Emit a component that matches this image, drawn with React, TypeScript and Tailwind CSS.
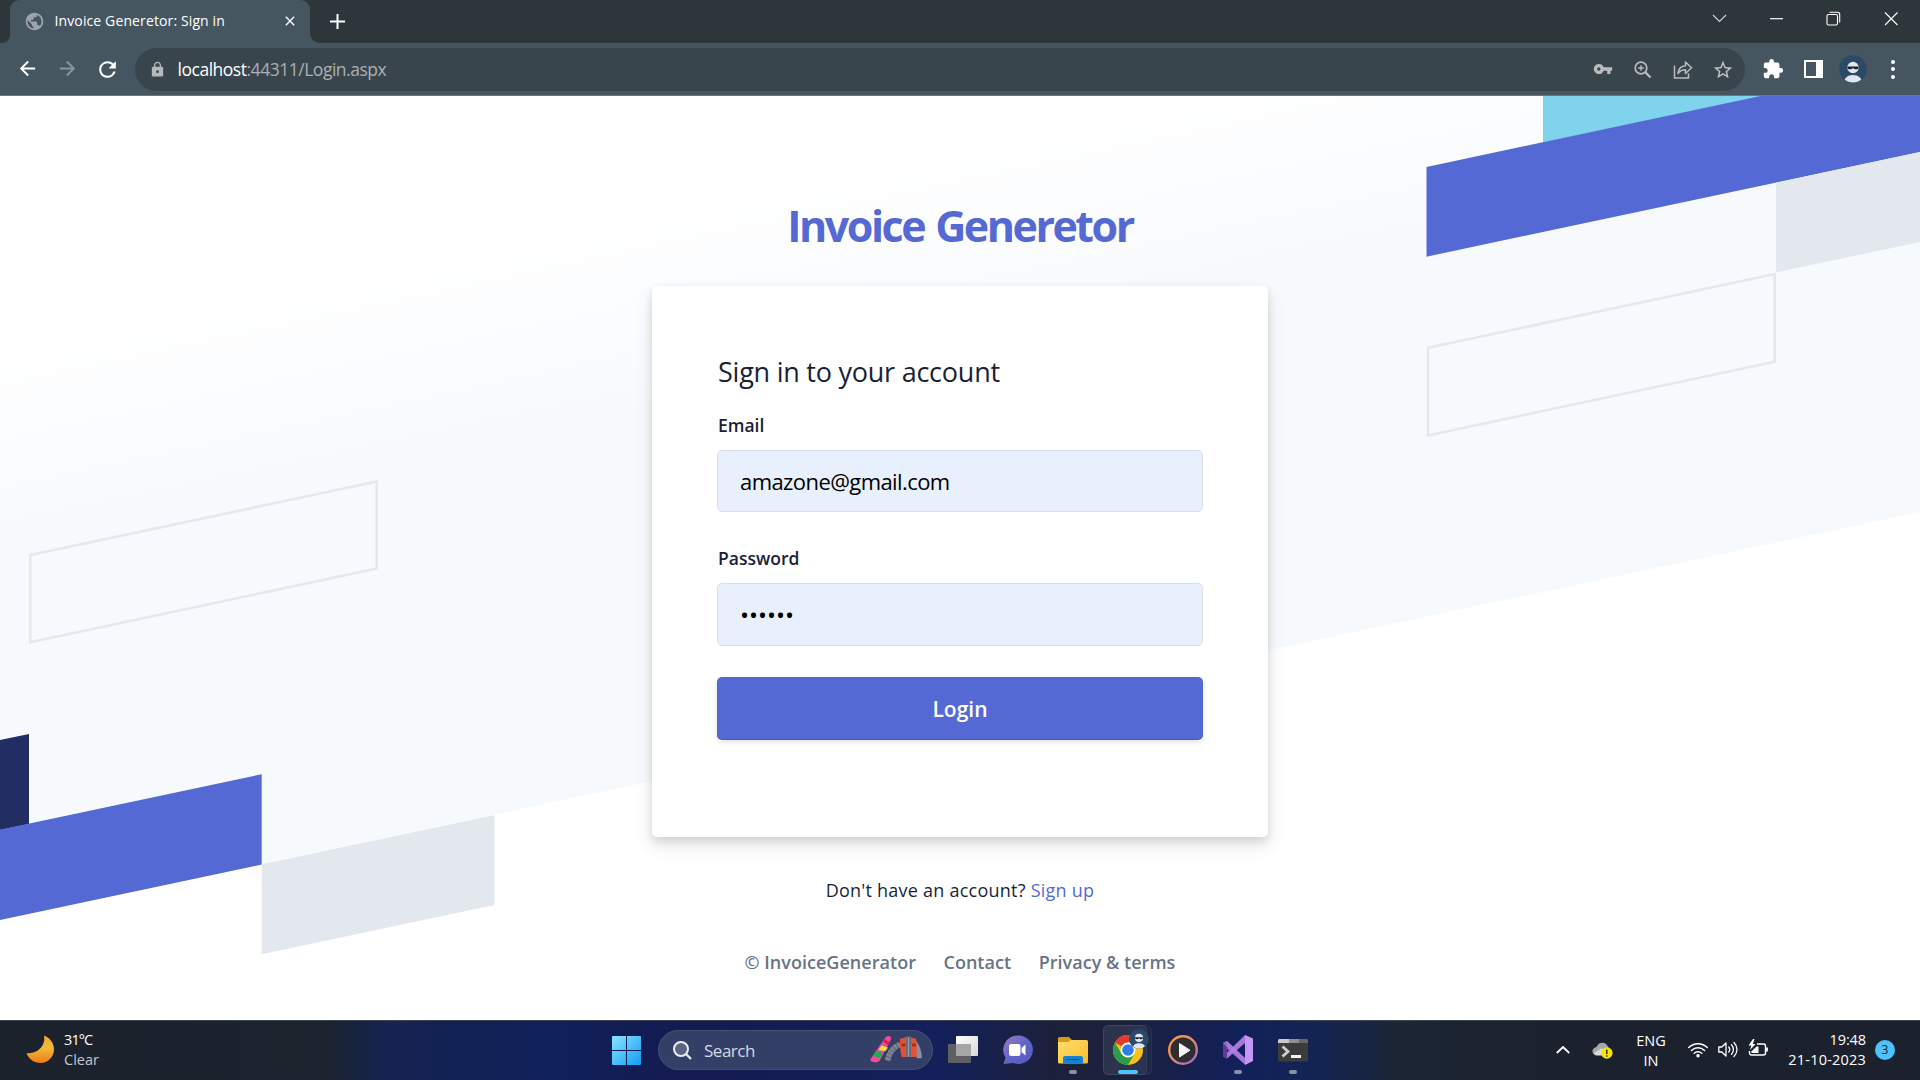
import type { ReactNode } from 'react';
import { MdVpnKey, MdStarBorder, MdExtension, MdPublic, MdLock, MdRefresh, MdArrowBack, MdArrowForward, MdClose } from 'react-icons/md';

function TabStrip() {
  return (
    <div className="flex h-[43px] justify-between bg-[#2c363b]">
      <div className="flex">
        <div className="flex w-[10px] bg-[#455660]">
          <div className="w-full rounded-br-[8px] bg-[#2c363b]" />
        </div>
        <div className="flex bg-[#2c363b]">
          <div className="flex w-[300px] items-center rounded-t-[9px] bg-[#455660] pb-[1px] pl-[14px] pr-[11px]">
            <MdPublic className="size-[21px] shrink-0 text-[#9da3ab]" />
            <span className="ml-[9.500px] flex-1 whitespace-nowrap text-[14px] leading-[20px] tracking-[0.120px] text-white">
              Invoice Generetor: Sign in
            </span>
            <MdClose className="mr-[1px] size-[16px] text-white" />
          </div>
        </div>
        <div className="w-[10px] bg-[#455660]">
          <div className="h-full rounded-bl-[10px] bg-[#2c363b]" />
        </div>
        <svg className="ml-[10px] mt-[14px] size-[15px]" viewBox="0 0 15 15" stroke="#fff" strokeWidth="2">
          <path d="M7.5 0v15M0 7.5h15" />
        </svg>
      </div>
      <div className="flex items-center pb-[7px] pr-[21px]">
        <svg className="mr-[42px] size-[15px]" viewBox="0 0 15 15" fill="none" stroke="#d5d8da" strokeWidth="1.1">
          <path d="M1 4l6.500 6.500 6.500-6.500" />
        </svg>
        <svg className="mr-[42px] size-[15px]" viewBox="0 0 15 15" stroke="#fff" strokeWidth="1.2">
          <path d="M1 7.700h13" />
        </svg>
        <svg className="mr-[43px] size-[15px]" viewBox="0 0 15 15" fill="none" stroke="#fff" strokeWidth="1.1">
          <rect x="1" y="3.500" width="10.500" height="10.500" rx="1.500" />
          <path d="M3.500 1.300h8c1.200 0 2.200 1 2.200 2.200v8" />
        </svg>
        <svg className="size-[15px]" viewBox="0 0 15 15" stroke="#fff" strokeWidth="1.1">
          <path d="M1 1.500l12.500 12.500M13.500 1.500L1 14" />
        </svg>
      </div>
    </div>
  );
}

function IconCell({ children }: { children: ReactNode }) {
  return <div className="flex w-10 shrink-0 items-center justify-center">{children}</div>;
}

function Person() {
  return (
    <svg className="size-full" viewBox="0 0 28 28">
      <clipPath id="avatarClip"><circle cx="14" cy="14" r="13.500" /></clipPath>
      <circle cx="14" cy="14" r="13.800" fill="#2a4a68" />
      <g clipPath="url(#avatarClip)">
        <circle cx="14" cy="12.500" r="5.700" fill="#dfe7ef" />
        <path d="M5 28c0-5 3.500-8 9-8s9 3 9 8z" fill="#dde6f2" />
      </g>
      <path d="M8.500 11.500h11v1.200c0 2-4 2-5.500.3-1.500 1.700-5.500 1.700-5.500-.3z" fill="#20242a" />
    </svg>
  );
}

function Toolbar() {
  return (
    <div className="flex h-[53px] border-b border-[#6b7780] bg-[#455660] pb-[4px] pl-[7px] pr-[7px] pt-[5px]">
      <IconCell><MdArrowBack className="mb-[2px] size-[23px] text-white" /></IconCell>
      <IconCell><MdArrowForward className="mb-[2px] size-[23px] text-[#8b959c]" /></IconCell>
      <IconCell><MdRefresh className="mb-[1px] size-[25px] text-white" /></IconCell>
      <div className="ml-[8px] flex w-[1610px] items-center rounded-full bg-[#39454c] pl-[14px] pr-[2px]">
        <MdLock className="size-[17px] text-[#b5b9bd]" />
        <span className="mb-[1px] ml-[11.500px] flex-1 whitespace-nowrap text-[17.500px] leading-[24px] tracking-[-0.480px] text-[#aab0b4]">
          <span className="text-white">localhost</span>:44311/Login.aspx
        </span>
        <IconCell><MdVpnKey className="mb-[1px] size-[20px] text-[#bbbcbe]" /></IconCell>
        <IconCell>
          <svg className="size-[18px]" viewBox="0 0 18 18" fill="none" stroke="#bbbcbe" strokeWidth="1.700">
            <circle cx="7" cy="7" r="5.800" />
            <path d="M11.300 11.300l5.200 5.200" strokeWidth="2.300" />
            <path d="M7 4.200v5.600M4.200 7h5.600" strokeWidth="1.400" />
          </svg>
        </IconCell>
        <IconCell>
          <svg className="size-[20px]" viewBox="0 0 20 20" fill="none" stroke="#bbbcbe" strokeWidth="1.500">
            <path d="M1.500 5.500v12.500h14v-4.500" />
            <path d="M5 13.500c.5-5 3.500-7.500 7.500-7.700V2l6 5.800-6 5.700V9.800c-3.500 0-5.500 1-7.500 3.700z" strokeLinejoin="round" />
          </svg>
        </IconCell>
        <IconCell><MdStarBorder className="size-[22px] text-[#c3c4c6]" /></IconCell>
      </div>
      <div className="ml-[8px] flex">
        <IconCell><MdExtension className="mb-[2px] size-[22px] text-white" /></IconCell>
        <IconCell>
          <div className="mb-[1px] h-[18px] w-[19px] border-[2.500px] border-r-[7px] border-white" />
        </IconCell>
        <IconCell><div className="mb-[1px] size-[28px]"><Person /></div></IconCell>
        <IconCell>
          <div className="mb-[1px] flex flex-col gap-[3.500px]">
            <i className="size-[4px] rounded-full bg-white" />
            <i className="size-[4px] rounded-full bg-white" />
            <i className="size-[4px] rounded-full bg-white" />
          </div>
        </IconCell>
      </div>
    </div>
  );
}

function Backdrop() {
  return (
    <svg className="absolute inset-0 h-full w-full" viewBox="0 96 1920 924">
      <defs>
        <linearGradient id="sky" gradientUnits="userSpaceOnUse" x1="0" y1="340" x2="41" y2="533">
          <stop offset="0" stopColor="#ffffff" />
          <stop offset="1" stopColor="#f7fafd" />
        </linearGradient>
      </defs>
      <path d="M0 330L1100 96H1920V512L0 919.500z" fill="url(#sky)" />
      <path d="M1543 96h220L1543 142.500z" fill="#7fd3ed" />
      <path d="M1426.500 167L1760.500 96H1920V152L1426.500 256.700z" fill="#5469d4" />
      <path d="M1776 182.600L1920 152V242L1776 272.500z" fill="#e3e8ee" />
      <path d="M1428 347.800L1774.700 274V361.700L1428 435.500z" fill="none" stroke="#e3e8ee" strokeWidth="2.500" />
      <path d="M30.300 555L376.700 481.500V568.500L30.300 642.200z" fill="none" stroke="#e3e8ee" strokeWidth="2.500" />
      <path d="M0 740L29 734V824L0 830z" fill="#212d63" />
      <path d="M0 829.800L261.700 774.200V864.500L0 920z" fill="#5469d4" />
      <path d="M261.700 864.300L494.500 815V905L261.700 954.200z" fill="#e3e8ee" />
    </svg>
  );
}

function LoginPage() {
  return (
    <div className="relative flex h-[924px] flex-col items-center overflow-hidden bg-white pt-[105px] text-[#1a1f36]">
      <Backdrop />
      <h1 className="relative whitespace-nowrap text-[43px] font-bold leading-[50px] tracking-[-2.500px] text-[#5469d4] [word-spacing:2.500px]">
        Invoice Generetor
      </h1>
      <div className="relative mt-[35px] h-[551px] w-[616px] rounded-[5px] bg-white px-[65px] pt-[66px] shadow-[0_9px_18px_rgba(60,66,87,0.12),0_4px_8px_rgba(0,0,0,0.12)]">
        <div className="ml-px whitespace-nowrap text-[27px] leading-[40px] tracking-[-0.240px]">Sign in to your account</div>
        <div className="ml-px mt-[21px] text-[17.500px] font-semibold leading-[24px]">Email</div>
        <div className="mt-[13px] flex h-[62px] items-center rounded-[5px] border border-[#d9dee8] bg-[#e8f0fe] px-[22px] text-[22px] tracking-[-0.580px] text-black">
          amazone@gmail.com
        </div>
        <div className="ml-px mt-[34px] text-[17.500px] font-semibold leading-[24px]">Password</div>
        <div className="mt-[13px] flex h-[63px] items-center rounded-[5px] border border-[#d9dee8] bg-[#e8f0fe] px-[22px] text-[24px] text-black">
          ••••••
        </div>
        <div className="mt-[31px] flex h-[63px] items-center justify-center rounded-[5px] bg-[#5469d4] pt-[2px] text-[21px] font-semibold text-white shadow-[inset_0_-1px_1px_rgba(0,0,0,0.15),0_2px_5px_rgba(0,0,0,0.12)]">
          Login
        </div>
      </div>
      <div className="relative mt-[41px] whitespace-nowrap text-[18px] leading-[24px] tracking-[0.240px]">
        Don't have an account? <span className="text-[#5469d4]">Sign up</span>
      </div>
      <div className="relative mt-[48px] flex gap-[27.500px] whitespace-nowrap text-[18px] font-semibold leading-[24px] tracking-[0.030px] text-[#697386]">
        <span>© InvoiceGenerator</span>
        <span>Contact</span>
        <span>Privacy &amp; terms</span>
      </div>
    </div>
  );
}

function AppCell({ children, mark }: { children: ReactNode; mark?: boolean }) {
  return (
    <div className="flex h-full w-[55px] flex-col items-center pt-[14px]">
      <div className="size-[30px]">{children}</div>
      {mark && <i className="mt-[5px] h-[4px] w-[8px] rounded-full bg-[#8b8fa3]" />}
    </div>
  );
}

function ChromeLogo() {
  return (
    <svg className="size-[30px]" viewBox="0 0 48 48">
      <circle cx="24" cy="24" r="24" fill="#fbc116" />
      <path d="M24 24L3.200 12A24 24 0 0 1 44.800 12H24z" fill="#e33b2e" />
      <path d="M3.200 12A24 24 0 0 0 24 48L34.400 30H24L13.600 30z" fill="#2d9c4a" />
      <circle cx="24" cy="24" r="12" fill="#fff" />
      <circle cx="24" cy="24" r="9.300" fill="#2f7df0" />
    </svg>
  );
}

function SearchArt() {
  return (
    <svg className="h-[30px] w-[54px]" viewBox="0 0 54 30">
      <path d="M16 3c2-3 7-2.500 6 1.500L10.500 26c-2 2.500-10 1.500-9-2z" fill="#f0499c" />
      <path d="M12.500 10.500l6.500 2-2.500 3.500-7-1z" fill="#ffe23c" />
      <path d="M15.500 4l5.500 3.500-2 2.500-5-3.500z" fill="#d3204a" />
      <ellipse cx="9" cy="19.500" rx="4" ry="3" fill="#16b14b" />
      <path d="M31 9.500c-6 2-11 8-12.500 16.500" stroke="#565a6c" strokeWidth="5.500" fill="none" />
      <path d="M31 9.500c-6 2-11 8-12.500 16.500" stroke="#7f8397" strokeWidth="5.500" fill="none" strokeDasharray="2.800 .8" />
      <path d="M45 4c5 4 7.500 11 8 19l-5 .5-4-11z" fill="#8b8ea4" />
      <path d="M31 4l8-2.500L47 4l1 7-.5 11h-15L31 12z" fill="#e8502f" />
      <path d="M37 1.500h5V22h-5z" fill="#686c7d" />
      <path d="M39.500 3v19" stroke="#a9adb8" strokeWidth=".8" />
      <path d="M32.500 8.500h4v3h-4zM43 8.500h4v3h-4z" fill="#9b3428" />
    </svg>
  );
}

function Taskbar() {
  return (
    <div className="flex h-[60px] border-t border-[#3f4450] bg-[linear-gradient(90deg,#1c222c_0px,#1c232e_325px,#142350_385px,#10205a_560px,#141b50_680px,#13205a_940px,#1c2038_1060px,#1b2040_1130px,#12205a_1240px,#142451_1320px,#1b2534_1400px,#1c222d_1550px)] text-[14.500px] leading-[20px] text-white">
      <div className="flex w-[612px] pl-[26px]">
        <svg className="mt-[14px] size-[29px]" viewBox="0 0 29 29">
          <defs>
            <linearGradient id="moon" x1="0" y1="0" x2="0" y2="1">
              <stop offset="0" stopColor="#f0a73a" />
              <stop offset=".45" stopColor="#f3b935" />
              <stop offset="1" stopColor="#ec7b1d" />
            </linearGradient>
          </defs>
          <path d="M18 0.500C24 3 28 8 28 14.500 28 22 22 28 14.500 28 8 28 2.500 24 .5 18 11 19.500 20 11 18 .5z" fill="url(#moon)" />
        </svg>
        <div className="ml-[9px] mt-[9px]">
          <div className="tracking-[-0.900px]">31°C</div>
          <div className="text-[#c4c8ce]">Clear</div>
        </div>
      </div>
      <svg className="mt-[15px] size-[29px]" viewBox="0 0 29 29">
        <defs>
          <linearGradient id="win" x1="0" y1="0" x2="1" y2="1">
            <stop offset="0" stopColor="#8ce4ff" />
            <stop offset="1" stopColor="#0f9cf5" />
          </linearGradient>
        </defs>
        <path d="M1 0h13v14H0V1a1 1 0 0 1 1-1zM15 0h13a1 1 0 0 1 1 1v13H15zM0 15h14v14H1a1 1 0 0 1-1-1zM15 15h14v13a1 1 0 0 1-1 1H15z" fill="url(#win)" />
      </svg>
      <div className="ml-[17px] mt-[9px] flex h-[40px] w-[275px] items-center rounded-full border border-[#475073] bg-[#333f66] pl-[14px] pr-[9px]">
        <svg className="size-[19px]" viewBox="0 0 19 19" fill="none" stroke="#eceef3" strokeWidth="2">
          <circle cx="8" cy="8" r="7" fill="#5a6484" />
          <path d="M13 13l5 5" strokeWidth="2.300" />
        </svg>
        <span className="ml-[12px] mt-[2px] flex-1 text-[17px] tracking-[-0.480px] text-[#d5d9e3]">Search</span>
        <SearchArt />
      </div>
      <div className="ml-[2px] flex">
        <AppCell>
          <svg className="size-[30px]" viewBox="0 0 30 30">
            <defs>
              <linearGradient id="sheet" x1="0" y1="0" x2="1" y2="1">
                <stop offset="0" stopColor="#fff" />
                <stop offset="1" stopColor="#d7d7d7" />
              </linearGradient>
            </defs>
            <rect x="8" y="1" width="22" height="20" rx="1" fill="url(#sheet)" />
            <rect x="0" y="9" width="23" height="19" rx="1" fill="#5d5f63" />
            <path d="M8 9h15v12H8z" fill="#a6a6a8" />
          </svg>
        </AppCell>
        <AppCell>
          <svg className="size-[30px]" viewBox="0 0 30 30">
            <defs>
              <linearGradient id="chat" x1="0" y1="0" x2="1" y2="1">
                <stop offset="0" stopColor="#9b7cc4" />
                <stop offset=".5" stopColor="#6264c7" />
                <stop offset="1" stopColor="#5458c0" />
              </linearGradient>
            </defs>
            <path d="M14.500 0.500a14.300 14.300 0 1 1-4 27.600L.5 29l2-6.500A14.300 14.300 0 0 1 14.500 .5z" fill="url(#chat)" />
            <rect x="6" y="9" width="11.500" height="12" rx="2" fill="#fff" />
            <path d="M18.500 13l4-3.500v11l-4-3.500z" fill="#fff" />
          </svg>
        </AppCell>
        <AppCell mark>
          <svg className="size-[30px]" viewBox="0 0 30 30">
            <defs>
              <linearGradient id="folder" x1="0" y1="0" x2="1" y2="1">
                <stop offset="0" stopColor="#ffdf70" />
                <stop offset="1" stopColor="#f9bd25" />
              </linearGradient>
            </defs>
            <path d="M0 3.500A1.500 1.500 0 0 1 1.500 2H11l3 3-3 5H0z" fill="#dc9a12" />
            <path d="M0 7h10l3-2h15.500A1.500 1.500 0 0 1 30 6.500V27a1.500 1.500 0 0 1-1.500 1.500h-27A1.500 1.500 0 0 1 0 27z" fill="url(#folder)" />
            <path d="M5 28.500V23a2 2 0 0 1 2-2h16a2 2 0 0 1 2 2v5.500z" fill="#1283d3" />
            <path d="M8.500 24.500h13" stroke="#064f8d" strokeWidth="1.200" />
          </svg>
        </AppCell>
        <div className="relative flex w-[55px] justify-center pt-[4px]">
          <div className="absolute left-[3px] top-[4px] h-[50px] w-[49px] rounded-[6px] border border-white/5 bg-white/[0.03]" />
          <div className="relative -ml-[5px] flex h-[50px] w-[44px] flex-col items-center rounded-[5px] border border-white/5 bg-white/5 pl-[5px] pt-[9px]">
            <ChromeLogo />
            <i className="mt-[5px] h-[4px] w-[20px] rounded-full bg-[#4cc2ff]" />
          </div>
          <div className="absolute left-[29px] top-[8px] size-[20px]"><Person /></div>
        </div>
        <AppCell>
          <svg className="size-[30px]" viewBox="0 0 30 30">
            <defs>
              <linearGradient id="ring" x1="0" y1="0" x2="1" y2="1">
                <stop offset="0" stopColor="#ff9a3d" />
                <stop offset=".5" stopColor="#e98a72" />
                <stop offset="1" stopColor="#9a62cf" />
              </linearGradient>
            </defs>
            <circle cx="15" cy="15" r="13.800" fill="#2e2e30" stroke="url(#ring)" strokeWidth="2.400" />
            <path d="M11.500 8.500v13.500l10.500-6.800z" fill="#f4f4f4" stroke="#f4f4f4" strokeLinejoin="round" />
          </svg>
        </AppCell>
        <AppCell mark>
          <svg className="size-[30px]" viewBox="0 0 30 30">
            <path d="M0 8l4-2 18 17v6.500L4 14v9l-4-2z" fill="#8661c5" />
            <path d="M0 21.500L22 0v8L4 23.500z" fill="#a877dc" />
            <path d="M0 8l4-2v17.500L0 21.500z" fill="#5f3c92" />
            <path d="M4 6l18 17v6.800L0 8z" fill="#b184e4" fillOpacity=".65" />
            <path d="M22 0l8 3.500V26l-8 4z" fill="#c795f5" />
          </svg>
        </AppCell>
        <AppCell mark>
          <svg className="size-[30px]" viewBox="0 0 30 30">
            <rect x="0" y="4" width="30" height="22.500" rx="1.500" fill="#3c3c3c" />
            <path d="M0 8V5.500a1.500 1.500 0 0 1 1.500-1.500H11v4z" fill="#c9c9c9" />
            <path d="M11 4h10v4H11z" fill="#8f8f8f" />
            <path d="M21 4h7.500A1.500 1.500 0 0 1 30 5.500v2.500h-9z" fill="#676767" />
            <path d="M4.500 11.500l5.500 5-5.500 5" fill="none" stroke="#cfcfcf" strokeWidth="2.800" />
            <path d="M13 21.500h10" stroke="#f4f4f4" strokeWidth="3" />
          </svg>
        </AppCell>
      </div>
      <div className="ml-auto flex pr-[25px]">
        <svg className="mt-[22px] h-[14px] w-[14px]" viewBox="0 0 14 14" fill="none" stroke="#fff" strokeWidth="1.800">
          <path d="M.8 10L7 4l6.200 6" />
        </svg>
        <svg className="ml-[22px] mt-[20px] h-[20px] w-[21px]" viewBox="0 0 21 20">
          <path d="M4.500 6C6.500.5 13.500.5 15.500 5L19 9.500 8 14H3.500C-.5 13-1 7.500 4.500 6z" fill="#a5a8ac" />
          <path d="M1.500 12.500L9 7.500l9 3v4H4z" fill="#d8dadc" />
          <circle cx="14.800" cy="12" r="5.800" fill="#fde300" />
          <path d="M14.800 8.500v4.500M14.800 14.300v1.500" stroke="#222" strokeWidth="1.400" />
        </svg>
        <div className="ml-[23px] mt-[10px] w-[30px] text-center tracking-[-0.060px]">
          <div>ENG</div>
          <div>IN</div>
        </div>
        <div className="ml-[22px] mt-[18px] flex gap-[10px]">
          <svg className="size-[20px]" viewBox="0 0 20 20" fill="none" stroke="#fff" strokeWidth="1.500" strokeLinecap="round">
            <path d="M.8 8.500a13 13 0 0 1 18.400 0M3.500 11.500a9.200 9.200 0 0 1 13 0M6.200 14.200a5.400 5.400 0 0 1 7.600 0" />
            <circle cx="10" cy="16.700" r="1" fill="#fff" />
          </svg>
          <svg className="size-[20px]" viewBox="0 0 20 20" fill="none" stroke="#fff" strokeWidth="1.300" strokeLinecap="round" strokeLinejoin="round">
            <path d="M.8 8v5h3l4.200 4V4L3.800 8zM10.800 8c1.200 1.500 1.200 3.500 0 5M13.500 5.800c2.500 2.700 2.500 6.700 0 9.400M16 3.500c4 4 4 10 0 14" />
          </svg>
          <svg className="size-[20px]" viewBox="0 0 20 20" fill="none" stroke="#fff" strokeWidth="1.400">
            <path d="M9 5h6.500A2 2 0 0 1 17.500 7v7a2 2 0 0 1-2 2h-12a2 2 0 0 1-2-2v-2" />
            <path d="M19 8.500v4" strokeWidth="1.800" />
            <path d="M8.500 7.500h2v6.500H3.500v-1.500z" fill="#fff" stroke="none" />
            <path d="M5 0L.5 6.500h2.800L2 11l5.500-6H4.800L6.500 0z" fill="#fff" stroke="none" />
          </svg>
        </div>
        <div className="ml-[18px] mt-[9px] w-[80px] whitespace-nowrap text-right tracking-[0.200px]">
          <div className="tracking-[-0.100px]">19:48</div>
          <div>21-10-2023</div>
        </div>
        <div className="ml-[9px] mt-[19px] flex size-[20px] items-center justify-center rounded-full bg-[#4cc2ff] text-[12px] text-[#10202c]">
          3
        </div>
      </div>
    </div>
  );
}

export default function App() {
  return (
    <div className="flex h-[1080px] w-[1920px] flex-col overflow-hidden font-['Open_Sans','Noto_Sans',sans-serif]">
      <TabStrip />
      <Toolbar />
      <LoginPage />
      <Taskbar />
    </div>
  );
}
